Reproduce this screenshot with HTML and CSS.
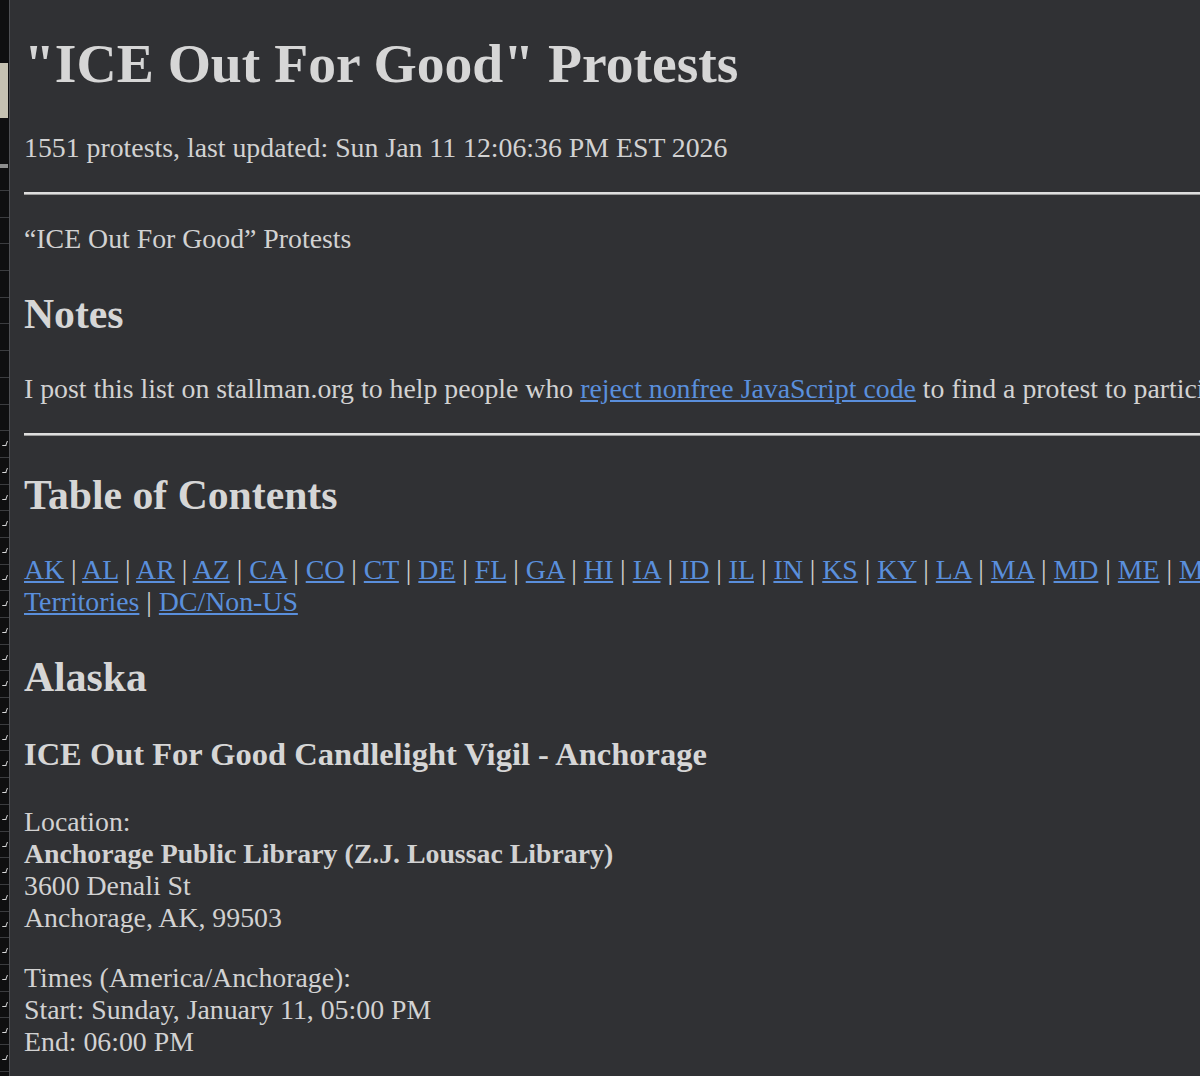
FILE: index.html
```html
<!DOCTYPE html>
<html lang="en">
<head>
<meta charset="utf-8">
<title>"ICE Out For Good" Protests</title>
<link rel="stylesheet" href="styles.css">
</head>
<body>
<div class="shell">
  <aside class="strip">
    <div class="strip-top"></div>
    <div class="strip-beige"></div>
    <div class="strip-gap"></div>
    <div class="strip-bar"></div>
    <div class="strip-gap2"></div>
    <div class="strip-row"></div>
    <div class="strip-row"></div>
    <div class="strip-row"></div>
    <div class="strip-row"></div>
    <div class="strip-row"></div>
    <div class="strip-row"></div>
    <div class="strip-row"></div>
    <div class="strip-row"></div>
    <div class="strip-row"></div>
    <div class="strip-row mark"></div>
    <div class="strip-row mark"></div>
    <div class="strip-row mark"></div>
    <div class="strip-row mark"></div>
    <div class="strip-row mark"></div>
    <div class="strip-row mark"></div>
    <div class="strip-row mark"></div>
    <div class="strip-row mark"></div>
    <div class="strip-row mark"></div>
    <div class="strip-row mark"></div>
    <div class="strip-row mark"></div>
    <div class="strip-row mark"></div>
    <div class="strip-row mark"></div>
    <div class="strip-row mark"></div>
    <div class="strip-row mark"></div>
    <div class="strip-row mark"></div>
    <div class="strip-row mark"></div>
    <div class="strip-row mark"></div>
    <div class="strip-row mark"></div>
    <div class="strip-row mark"></div>
    <div class="strip-row mark"></div>
    <div class="strip-row mark"></div>
    <div class="strip-row mark"></div>
    <div class="strip-row mark"></div>
    <div class="strip-row mark"></div>
  </aside>
  <main class="page">
    <h1 class="title">"ICE Out For Good" Protests</h1>
    <p class="para">1551 protests, last updated: Sun Jan 11 12:06:36 PM EST 2026</p>
    <hr class="rule">
    <p class="para">&ldquo;ICE Out For Good&rdquo; Protests</p>
    <h2 class="section">Notes</h2>
    <p class="para">I post this list on stallman.org to help people who <a class="link" href="#">reject nonfree JavaScript code</a> to find a protest to participate in. The information comes from the organizers' site, which requires running nonfree JavaScript.</p>
    <hr class="rule">
    <h2 class="section">Table of Contents</h2>
    <p class="para toc"><a class="link" href="#">AK</a> | <a class="link" href="#">AL</a> | <a class="link" href="#">AR</a> | <a class="link" href="#">AZ</a> | <a class="link" href="#">CA</a> | <a class="link" href="#">CO</a> | <a class="link" href="#">CT</a> | <a class="link" href="#">DE</a> | <a class="link" href="#">FL</a> | <a class="link" href="#">GA</a> | <a class="link" href="#">HI</a> | <a class="link" href="#">IA</a> | <a class="link" href="#">ID</a> | <a class="link" href="#">IL</a> | <a class="link" href="#">IN</a> | <a class="link" href="#">KS</a> | <a class="link" href="#">KY</a> | <a class="link" href="#">LA</a> | <a class="link" href="#">MA</a> | <a class="link" href="#">MD</a> | <a class="link" href="#">ME</a> | <a class="link" href="#">MI</a> | <a class="link" href="#">MN</a> | <a class="link" href="#">MO</a> | <a class="link" href="#">MS</a> | <a class="link" href="#">MT</a> | <a class="link" href="#">NC</a> | <a class="link" href="#">ND</a> | <a class="link" href="#">NE</a> | <a class="link" href="#">NH</a> | <a class="link" href="#">NJ</a> | <a class="link" href="#">NM</a> | <a class="link" href="#">NV</a> | <a class="link" href="#">NY</a> | <a class="link" href="#">OH</a> | <a class="link" href="#">OK</a> | <a class="link" href="#">OR</a> | <a class="link" href="#">PA</a> | <a class="link" href="#">RI</a> | <a class="link" href="#">SC</a> | <a class="link" href="#">SD</a> | <a class="link" href="#">TN</a> | <a class="link" href="#">TX</a> | <a class="link" href="#">UT</a> | <a class="link" href="#">VA</a> | <a class="link" href="#">VT</a> | <a class="link" href="#">WA</a> | <a class="link" href="#">WI</a> | <a class="link" href="#">WV</a> | <a class="link" href="#">WY</a> |<br><a class="link" href="#">Territories</a> | <a class="link" href="#">DC/Non-US</a></p>
    <h2 class="section">Alaska</h2>
    <h3 class="event">ICE Out For Good Candlelight Vigil - Anchorage</h3>
    <p class="para">Location:<br><b>Anchorage Public Library (Z.J. Loussac Library)</b><br>3600 Denali St<br>Anchorage, AK, 99503</p>
    <p class="para">Times (America/Anchorage):<br>Start: Sunday, January 11, 05:00 PM<br>End: 06:00 PM</p>
    <p class="para">Organizer: Indivisible Alaska</p>
  </main>
</div>
</body>
</html>
```
FILE: styles.css
```css
html {
  overflow: hidden;
  background: #303134;
}

body {
  margin: 0;
  background: #303134;
  color: #d2d2d2;
  font-family: "Liberation Serif", "Times New Roman", serif;
  font-size: 27.8px;
}

.shell {
  display: flex;
  align-items: flex-start;
  width: 3000px;
  min-height: 1076px;
}

.strip {
  flex: 0 0 9px;
  width: 9px;
  height: 1076px;
  overflow: hidden;
  background: #0f0f10;
  border-right: 1px solid #4f5054;
  display: flex;
  flex-direction: column;
}

.strip-top { height: 63px; flex: 0 0 auto; }
.strip-beige { height: 55px; flex: 0 0 auto; background: #c6c2b2; width: 8px; }
.strip-gap { height: 46px; flex: 0 0 auto; }
.strip-bar { height: 4px; flex: 0 0 auto; background: #8d8d8d; width: 8px; }
.strip-gap2 { height: 22px; flex: 0 0 auto; }

.strip-row {
  flex: 0 0 auto;
  height: 25.7px;
  border-top: 1px solid #3b3c3f;
  position: relative;
}

.strip-row.mark::after {
  content: "";
  position: absolute;
  right: 2px;
  top: 10px;
  width: 3px;
  height: 4px;
  border-right: 1px solid #d8d8d8;
  border-bottom: 1px solid #d8d8d8;
  transform: skewX(-20deg);
}

.page {
  flex: 1 1 auto;
  padding: 0 14px;
  min-width: 0;
}

.title {
  font-size: 55.6px;
  font-weight: bold;
  line-height: normal;
  margin: 30.5px 0 37px;
  color: #d6d6d6;
}

.section {
  font-size: 41.7px;
  font-weight: bold;
  line-height: normal;
  margin: 35px 0;
  color: #d6d6d6;
}

.event {
  font-size: 32.5px;
  font-weight: bold;
  line-height: normal;
  margin: 33px 0;
  color: #d6d6d6;
}

.para {
  margin: 28.2px 0;
  line-height: normal;
  white-space: normal;
}

.rule {
  margin: 13.9px 0;
  height: 0;
  border: 0;
  border-top: 2px solid #dedede;
  border-bottom: 1px solid #9b9b9b;
}

.link {
  color: #5a8fdc;
  text-decoration: underline;
}
```
